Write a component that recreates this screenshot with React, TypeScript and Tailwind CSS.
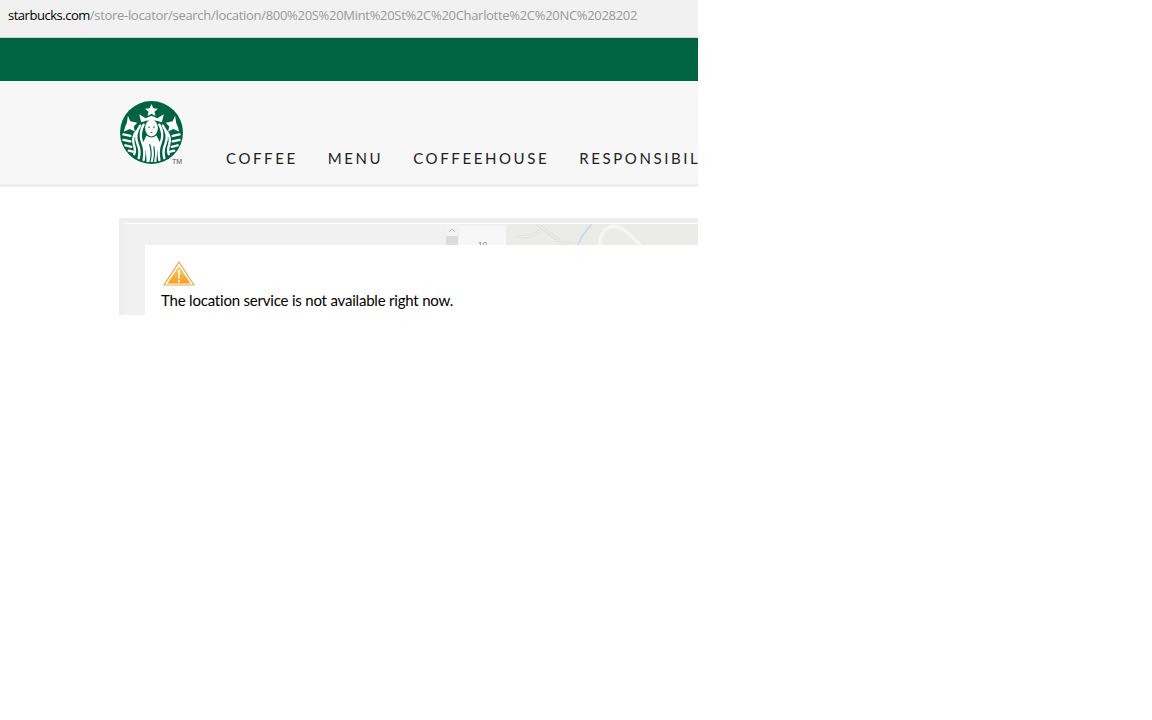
import React from 'react';

const NAV_ITEMS = ['COFFEE', 'MENU', 'COFFEEHOUSE', 'RESPONSIBILITY'];

const Logo = () => (
  <svg width="63" height="63" viewBox="0 0 64 64" className="block">
    <circle cx="32" cy="32" r="32" fill="#006341" />
    {/* star and crown */}
    <polygon
      points="32,3 33.9,7.4 38.5,7.8 35,10.8 36.1,15.3 32,12.9 27.9,15.3 29,10.8 25.5,7.8 30.1,7.4"
      fill="#fff"
    />
    <path d="M19.5 13.5 L26 17.5 L32 15 L38 17.5 L44.5 13.5 L42.5 21.5 Q32 17.5 21.5 21.5 Z" fill="#fff" />
    {/* side stars */}
    <polygon points="8,15 10.5,20.5 17.5,22 14,26 15,31 10,28.5 4,31 5,27 7,22" fill="#fff" />
    <polygon points="56,15 53.5,20.5 46.5,22 50,26 49,31 54,28.5 60,31 59,27 57,22" fill="#fff" />
    {/* face and body */}
    <ellipse cx="32" cy="27.5" rx="6.5" ry="8.5" fill="#fff" />
    <path d="M27 35 Q32 39 37 35 L41 43 Q37 50 37 62 L27 62 Q27 50 23 43 Z" fill="#fff" />
    <path d="M28.5 26.5 H30.5 M33.5 26.5 H35.5 M31 32 H33" stroke="#006341" strokeWidth="0.9" />
    <path d="M30 44 Q33 52 30.5 62 M34.5 46 Q36 54 34 62" fill="none" stroke="#006341" strokeWidth="1.2" />
    {/* hair */}
    <g fill="none" stroke="#fff" strokeWidth="2.4" strokeLinecap="round">
      <path d="M24 24 Q19 33 22.5 42 Q26 50 24 60" />
      <path d="M40 24 Q45 33 41.5 42 Q38 50 40 60" />
      <path d="M20.5 25 Q14 34 18 44 Q21 51 19 58" />
      <path d="M43.5 25 Q50 34 46 44 Q43 51 45 58" />
      <path d="M16.5 31 Q12 37 14 44 Q16 50 14.5 54" />
      <path d="M47.5 31 Q52 37 50 44 Q48 50 49.5 54" />
      <path d="M3.5 34 L10.5 35.5" />
      <path d="M60.5 34 L53.5 35.5" />
      <path d="M3.5 39.5 L10.5 41" />
      <path d="M60.5 39.5 L53.5 41" />
      <path d="M5.5 45 L11.5 46.5" />
      <path d="M58.5 45 L52.5 46.5" />
      <path d="M9 50.5 L13 51.5" />
      <path d="M55 50.5 L51 51.5" />
    </g>
  </svg>
);

const WarningIcon = () => (
  <svg width="32" height="25" viewBox="0 0 32 25" className="block">
    <defs>
      <linearGradient id="warn" x1="0" y1="0" x2="0" y2="1">
        <stop offset="0" stopColor="#fdd067" />
        <stop offset="1" stopColor="#f59c1c" />
      </linearGradient>
    </defs>
    <path d="M16 1 L31 24 H1 Z" fill="#fff" stroke="#f0a048" strokeWidth="1.2" strokeLinejoin="round" />
    <path d="M16 5 L27.5 22.5 H4.5 Z" fill="url(#warn)" />
    <path d="M14.9 9 H17.1 L16.6 18 H15.4 Z" fill="#fff" />
    <rect x="15" y="19" width="2" height="2.2" fill="#fff" />
  </svg>
);

const MapRoads = () => (
  <svg width="192" height="21" viewBox="0 0 192 21" className="block">
    <g fill="none" strokeLinecap="round">
      <path d="M14 13 Q28 12 33 7" stroke="#dcdcd9" strokeWidth="3" />
      <path d="M31 0 Q44 10 54 17 Q62 20 68 21" stroke="#dcdcd9" strokeWidth="3" />
      <path d="M14 13 Q28 12 33 7" stroke="#eeeeec" strokeWidth="1.5" />
      <path d="M31 0 Q44 10 54 17 Q62 20 68 21" stroke="#eeeeec" strokeWidth="1.5" />
      <path d="M94 21 Q94 4 108 2 Q118 3 134 21" stroke="#f5f5f3" strokeWidth="3.5" />
    </g>
    <path d="M86 0 Q76 10 72 21" fill="none" stroke="#c6daef" strokeWidth="1.8" />
  </svg>
);

export default function App() {
  return (
    <div className="w-[698px] h-[315px] overflow-hidden bg-white">
      <div className="h-[38px] bg-[#f1f1f1] border-b border-[#cfcfcf] pl-2 pt-[6px] text-[13px] leading-[18px] whitespace-nowrap tracking-[-0.305px] font-['Open_Sans',sans-serif] text-[#999999]">
        <span className="text-black tracking-[-0.48px]">starbucks.com</span>/store-locator/search/location/800%20S%20Mint%20St%2C%20Charlotte%2C%20NC%2028202
      </div>
      <div className="h-[43px] bg-[#006341]" />
      <div className="h-[106px] bg-[#f7f7f7] border-b-[3px] border-[#eeeeee] pl-[120px] flex whitespace-nowrap">
        <div className="relative pt-5 w-[106px] shrink-0">
          <Logo />
          <span className="absolute left-[52px] top-[76px] text-[7px] leading-[9px] text-[#555] font-['Liberation_Sans',sans-serif]">TM</span>
        </div>
        <div className="flex gap-[30px] pt-[67px] font-['Lato',sans-serif] text-[15px] leading-[20px] tracking-[2.6px] text-[#222]">
          {NAV_ITEMS.map((item) => (
            <span key={item}>{item}</span>
          ))}
        </div>
      </div>
      <div className="pt-[31px] pl-[119px]">
        <div className="relative h-[97px] w-[579px] bg-[#eeeeee] pl-[5px] pt-[5px]">
          <div className="h-[92px] border-t border-white bg-[#f1f1f1] flex pl-[322px]">
            <div className="w-[12px] h-[21px] flex flex-col shrink-0">
              <div className="h-[12px] bg-[#f3f3f3] flex justify-center items-center">
                <svg width="8" height="5" viewBox="0 0 8 5"><path d="M1 4 L4 1 L7 4" fill="none" stroke="#bbb" strokeWidth="1" /></svg>
              </div>
              <div className="h-[9px] bg-[#dcdcdc]" />
            </div>
            <div className="w-[47px] h-[19px] mt-[2px] ml-px bg-[#f7f7f7] text-center text-[8px] leading-[8px] pt-[15px] text-[#777] font-['Liberation_Sans',sans-serif] shrink-0 overflow-hidden">
              10
            </div>
            <div className="flex-1 h-[21px] bg-[#ebebe8]">
              <MapRoads />
            </div>
          </div>
          <div className="absolute left-[26px] top-[27px] right-0 bottom-0 bg-white pl-[18px] pt-4">
            <WarningIcon />
            <p className="mt-1 -ml-[2px] font-['Lato',sans-serif] text-[15px] leading-[20px] text-black whitespace-nowrap tracking-[-0.2px]">
              The location service is not available right now.
            </p>
          </div>
        </div>
      </div>
    </div>
  );
}
